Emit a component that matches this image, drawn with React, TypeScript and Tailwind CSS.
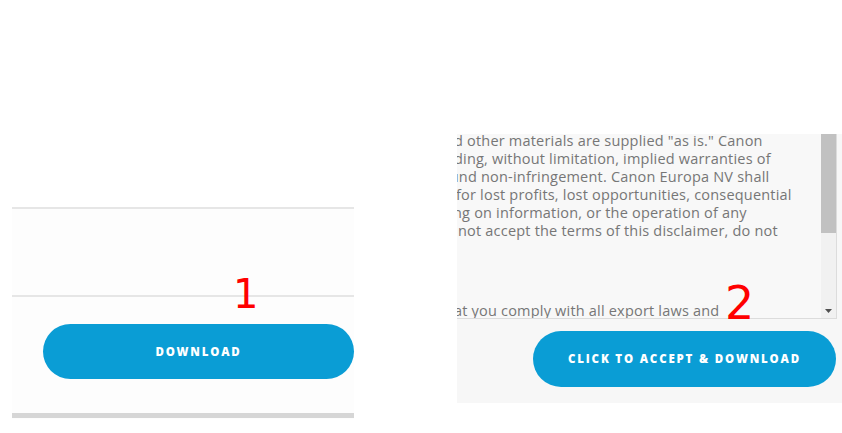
import React from "react"

const lines = [
  { text: "d other materials are supplied \"as is.\" Canon", cls: "-ml-[3px]" },
  { text: "ding, without limitation, implied warranties of", cls: "-ml-[3px]" },
  { text: "ınd non-infringement. Canon Europa NV shall", cls: "-ml-[2px]" },
  { text: "for lost profits, lost opportunities, consequential", cls: "-ml-[1px]" },
  { text: "ng on information, or the operation of any", cls: "-ml-[4px]" },
  { text: "not accept the terms of this disclaimer, do not", cls: "ml-[1px]" },
]

const App = () => {
  return (
    <div className="relative flex h-[433px] w-[842px] overflow-hidden bg-white font-['Open_Sans',sans-serif]">
      {/* left: plain download */}
      <div className="ml-3 mt-[207px] flex h-[212px] w-[342px] flex-col bg-[#fdfdfd]">
        <div className="h-[2px] bg-[#e6e6e6]" />
        <div className="h-[86px]" />
        <div className="h-[2px] bg-[#e6e6e6]" />
        <div className="mt-[27px] flex justify-end">
          <button className="h-[55px] w-[311px] rounded-full bg-[#0a9dd5] text-[11.5px] font-extrabold tracking-[1.8px] text-white">
            DOWNLOAD
          </button>
        </div>
        <div className="mt-[34px] h-[5px] bg-[#d6d6d6]" />
      </div>

      {/* right: disclaimer + accept */}
      <div className="ml-[103px] mt-[134px] flex h-[269px] w-[385px] flex-col bg-[#f7f7f7]">
        <div className="flex h-[185px] w-[380px] border-b border-r border-[#dcdcdc] bg-[#f8f8f8]">
          <div className="flex-1 overflow-hidden text-[14.5px] leading-[18px] tracking-[0.2px] text-[#767676]">
            <div className="-mt-[2px]">
              {lines.map((l) => (
                <div key={l.text} className={`whitespace-nowrap ${l.cls}`}>
                  {l.text}
                </div>
              ))}
              <div className="h-[62px]" />
              <div className="-ml-[3px] whitespace-nowrap">at you comply with all export laws and</div>
            </div>
          </div>
          <div className="flex w-[15px] flex-col bg-[#f1f1f1]">
            <div className="h-[99px] bg-[#c1c1c1]" />
            <div className="flex-1" />
            <div className="flex h-[15px] items-center justify-center">
              <svg width="7" height="4" viewBox="0 0 7 4">
                <path d="M0 0h7L3.5 4z" fill="#505050" />
              </svg>
            </div>
          </div>
        </div>
        <div className="mt-[12px] flex w-[379px] justify-end">
          <button className="h-[56px] w-[303px] rounded-full bg-[#0a9dd5] text-[11.5px] font-extrabold tracking-[1.8px] text-white">
            CLICK TO ACCEPT &amp; DOWNLOAD
          </button>
        </div>
      </div>

      {/* annotations */}
      <span className="absolute left-[233px] top-[270px] font-['DejaVu_Sans',sans-serif] text-[40px] leading-[48px] text-[#ff0000]">
        1
      </span>
      <span className="absolute left-[725px] top-[276px] font-['DejaVu_Sans',sans-serif] text-[46px] leading-[54px] text-[#ff0000]">
        2
      </span>
    </div>
  )
}

export default App
